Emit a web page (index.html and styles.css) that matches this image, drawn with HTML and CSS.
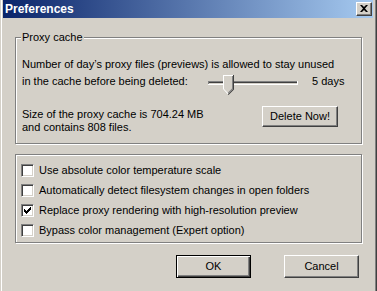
FILE: index.html
```html
<!DOCTYPE html>
<html>
<head>
<meta charset="utf-8">
<link rel="stylesheet" href="styles.css">
</head>
<body>
<div class="window">
  <div class="titlebar">
    <span class="title">Preferences</span>
    <span class="close"><svg width="8" height="7" viewBox="0 0 8 7"><path d="M0 0h2l2 2 2-2h2L5 3.5 8 7H6L4 5 2 7H0l3-3.5z" fill="#000"/></svg></span>
  </div>
  <div class="body">
    <fieldset class="group proxy">
      <legend>Proxy cache</legend>
      <p class="line">Number of day’s proxy files (previews) is allowed to stay unused</p>
      <div class="slider-row">
        <span class="slider-label">in the cache before being deleted:</span>
        <svg class="slider" width="90" height="20" viewBox="0 0 90 20">
          <rect x="0" y="6" width="90" height="1" fill="#808080"/>
          <rect x="0" y="6" width="1" height="4" fill="#808080"/>
          <rect x="1" y="7" width="88" height="1" fill="#404040"/>
          <rect x="1" y="8" width="88" height="1" fill="#d4d0c8"/>
          <rect x="0" y="9" width="90" height="1" fill="#fff"/>
          <rect x="89" y="6" width="1" height="4" fill="#fff"/>
          <path d="M15 0h11v14l-5 5h0l-1 0-5-5z" fill="#d4d0c8"/>
          <path d="M15 0h10v1h-9v13l4.5 4.5-0.7 0.7L15 14z" fill="#fff"/>
          <path d="M25 0h1v14.4l-5.5 5.5-0.7-0.7L25 14z" fill="#404040"/>
          <path d="M24 1h1v13l-4.5 4.5-0.7-0.7L24 13.6z" fill="#808080"/>
        </svg>
        <span class="days">5 days</span>
      </div>
      <div class="size-row">
        <p class="size-text">Size of the proxy cache is 704.24 MB<br>and contains 808 files.</p>
        <span class="btn delete">Delete Now!</span>
      </div>
    </fieldset>
    <div class="group options">
      <div class="check"><span class="box"></span><span>Use absolute color temperature scale</span></div>
      <div class="check"><span class="box"></span><span>Automatically detect filesystem changes in open folders</span></div>
      <div class="check"><span class="box"><svg width="7" height="7" viewBox="0 0 7 7"><path d="M6 0h1v3H6v1H5v1H4v1H3v1H2V6H1V5H0V2h1v1h1v1h1V3h1V2h1V1h1z" fill="#000"/></svg></span><span>Replace proxy rendering with high-resolution preview</span></div>
      <div class="check"><span class="box"></span><span>Bypass color management (Expert option)</span></div>
    </div>
    <div class="actions">
      <span class="btn default">OK</span>
      <span class="btn">Cancel</span>
    </div>
  </div>
</div>
</body>
</html>
```
FILE: styles.css
```css
* { box-sizing: border-box; }
html, body { margin: 0; padding: 0; }
body {
  font-family: "Liberation Sans", Arial, sans-serif;
  font-size: 11px;
  line-height: 13px;
  color: #000;
  background: #d4d0c8;
}
.window {
  width: 377px;
  height: 291px;
  background: #d4d0c8;
  padding: 0 4px 0 3px;
  box-shadow: inset 1px 0 #d4d0c8, inset 2px 0 #fff, inset -1px 0 #404040, inset -2px 0 #808080;
}
.titlebar {
  height: 18px;
  background: linear-gradient(to right, #0a246a, #a6caf0);
  display: flex;
  align-items: center;
  justify-content: space-between;
  padding: 0 1px 0 2px;
}
.title {
  color: #fff;
  font-weight: bold;
  font-size: 12px;
  line-height: 14px;
}
.close {
  width: 16px;
  height: 14px;
  background: #d4d0c8;
  border: 1px solid;
  border-color: #fff #404040 #404040 #fff;
  box-shadow: inset -1px -1px #808080;
  display: flex;
  align-items: center;
  justify-content: center;
  padding: 0 1px 1px 0;
}
.close svg { display: block; }
.body {
  padding: 0 11px 0 12px;
}
.group {
  border: 1px solid #808080;
  box-shadow: inset 1px 1px #fff, 1px 1px #fff;
}
.proxy {
  margin: 13px 0 0 0;
  padding: 14px 6px 9px 6px;
  min-width: 0;
}
.proxy legend {
  padding: 0 1px;
  margin-left: -1px;
  background: #d4d0c8;
  line-height: 13px;
}
p { margin: 0; }
.slider-row {
  display: flex;
  align-items: flex-start;
  margin-top: 4px;
  height: 20px;
}
.slider-label { width: 186px; }
.slider { display: block; margin-right: 14px; }
.size-row {
  display: flex;
  justify-content: space-between;
  align-items: flex-start;
  margin-top: 11px;
  padding-right: 17px;
}
.size-text { margin-top: 2px; }
.btn {
  display: flex;
  align-items: center;
  justify-content: center;
  width: 75px;
  height: 23px;
  border: 1px solid;
  border-color: #fff #404040 #404040 #fff;
  box-shadow: inset -1px -1px #808080;
  background: #d4d0c8;
}
.delete { width: 76px; height: 21px; }
.btn.default {
  border-color: #000;
  box-shadow: inset 1px 1px #fff, inset -1px -1px #404040, inset -2px -2px #808080;
}
.options {
  margin-top: 10px;
  padding: 9px 5px 5px 5px;
  display: flex;
  flex-direction: column;
  gap: 7px;
}
.check {
  display: flex;
  align-items: center;
  gap: 5px;
  height: 13px;
}
.box {
  width: 13px;
  height: 13px;
  background: #fff;
  border: 1px solid;
  border-color: #808080 #fff #fff #808080;
  box-shadow: inset 1px 1px #404040, inset -1px -1px #d4d0c8;
  display: flex;
  align-items: center;
  justify-content: center;
  flex: none;
}
.box svg { display: block; }
.actions {
  display: flex;
  justify-content: flex-end;
  gap: 33px;
  margin-top: 12px;
  padding-right: 3px;
}
```
